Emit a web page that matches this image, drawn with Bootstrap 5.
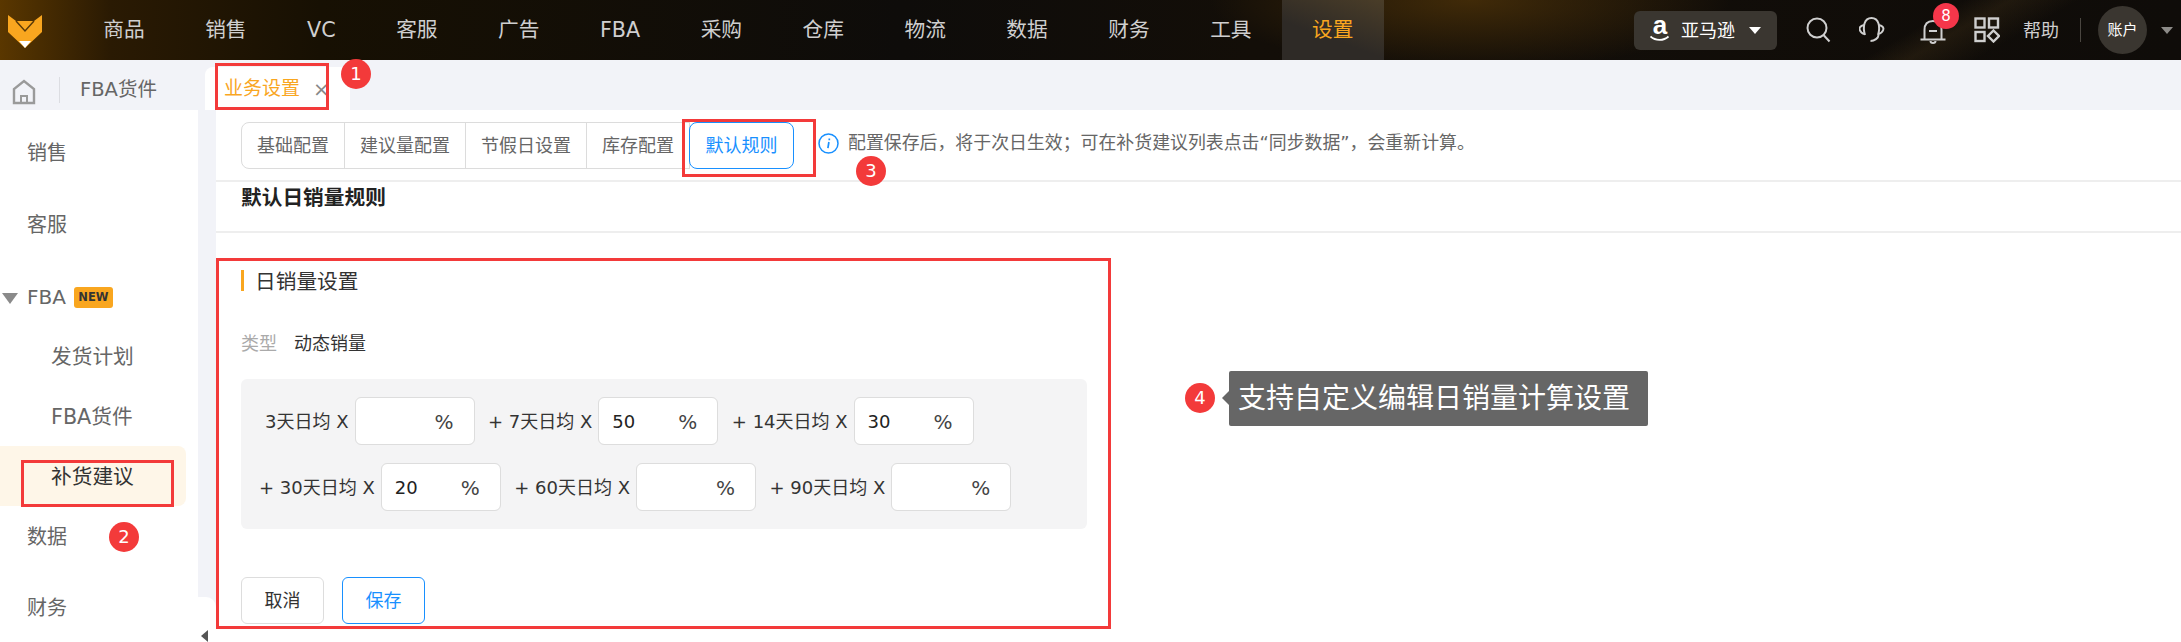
<!DOCTYPE html>
<html lang="zh">
  <head>
    <meta charset="UTF-8" />
    <meta name="viewport" content="width=device-width, initial-scale=1.0" />
    <title>业务设置</title>
    <link href="https://cdn.jsdelivr.net/npm/bootstrap@5.3.0/dist/css/bootstrap.min.css" rel="stylesheet" />
    <style>
      html, body {
        height: 642px;
        overflow: hidden;
      }
      body {
        position: relative;
        background: #fff;
        color: #333;
        font-family: "DejaVu Sans", "Noto Sans CJK SC", sans-serif;
        font-size: 18px;
      }
      /* top bar */
      .top-bar {
        height: 60px;
        padding: 0 8px 0 0;
        flex-wrap: nowrap;
        background:
          linear-gradient(150deg, transparent 86%, rgba(120, 90, 40, 0.16) 88%, transparent 91%),
          radial-gradient(ellipse 260px 70px at 1470px 0, rgba(80, 52, 8, 0.75), transparent),
          linear-gradient(90deg, #5a3700 0, #2a1a03 110px, #171003 320px, #0e0c0a 900px, #130e08 1250px, #0f0c09 100%);
      }
      .fox-logo {
        width: 73px;
        height: 60px;
        flex: none;
      }
      .top-nav .nav-link {
        height: 60px;
        line-height: 60px;
        padding: 0 30.25px;
        font-size: 20.7px;
        color: #cfcfcf;
      }
      .top-nav .nav-link.active {
        background: linear-gradient(20deg, #2e2a26 40%, #4a3d28 100%);
        color: #f9a61f;
      }
      .market-btn {
        width: 143px;
        height: 39px;
        background: #3a3630;
        border-radius: 6px;
        color: #fff;
        padding-left: 16px;
      }
      .amazon-a {
        width: 20px;
        height: 32px;
        margin-right: 11px;
        flex: none;
      }
      .market-caret {
        width: 0;
        height: 0;
        margin-left: 14px;
        border-left: 6px solid transparent;
        border-right: 6px solid transparent;
        border-top: 7px solid #fff;
      }
      .top-ico {
        position: relative;
        width: 26px;
        height: 26px;
        margin-left: 28px;
        flex: none;
      }
      .top-ico.bell-ico {
        margin-left: 35px;
      }
      .bell-count {
        position: absolute;
        left: 13px;
        top: -14px;
        width: 26px;
        height: 26px;
        line-height: 26px;
        text-align: center;
        border-radius: 50%;
        background: #f5364a;
        color: #fff;
        font-size: 15px;
      }
      .help-link {
        margin-left: 23px;
        color: #cfcfcf;
      }
      .top-sep {
        width: 1px;
        height: 24px;
        margin-left: 21px;
        background: #4a4640;
      }
      .account-dot {
        width: 49px;
        height: 48px;
        margin-left: 17px;
        border-radius: 50%;
        background: #3a3630;
        color: #fff;
        font-size: 15px;
      }
      .account-caret {
        width: 0;
        height: 0;
        margin-left: 14px;
        border-left: 6px solid transparent;
        border-right: 6px solid transparent;
        border-top: 7px solid #8d8b88;
      }
      /* tab strip */
      .tab-strip {
        height: 50px;
        background: #f2f3f8;
        padding-top: 7px;
      }
      .home-cell {
        width: 60px;
        height: 26px;
        padding-left: 12px;
        margin-top: 10px;
        border-right: 1px solid #dcdde2;
      }
      .tab-plain {
        margin: 10px 0 0 20px;
        width: 125px;
        line-height: 26px;
        font-size: 19.5px;
        color: #666;
      }
      .tab-current {
        width: 145px;
        height: 43px;
        padding-left: 19px;
        background: #fff;
        border-radius: 8px 8px 0 0;
        color: #f9a61f;
        font-size: 19px;
      }
      .tab-close {
        margin-left: 13px;
        color: #888;
        font-size: 20px;
      }
      /* sidebar */
      .page-body {
        height: 532px;
      }
      .side-menu {
        width: 198px;
        padding: 7px 12px 0 0;
        flex: none;
        font-size: 20px;
      }
      .side-menu .nav-link {
        display: flex;
        align-items: center;
        height: 72px;
        padding: 0 0 0 27px;
        color: #666;
      }
      .side-menu .nav-link.fba-head {
        height: 65px;
        padding-top: 7px;
      }
      .side-menu .nav-link.sub-link {
        height: 60px;
        padding: 4px 0 0 51px;
        font-size: 20.7px;
      }
      .side-menu .nav-link.sub-link.active {
        background: #fef6e8;
        border-radius: 0 8px 8px 0;
        color: #333;
      }
      .side-menu .nav-link.data-link {
        height: 62px;
        margin-bottom: 4px;
      }
      .side-caret {
        position: absolute;
        left: 2px;
        top: 32px;
        width: 0;
        height: 0;
        border-left: 8px solid transparent;
        border-right: 8px solid transparent;
        border-top: 11px solid #8a8a8a;
      }
      .new-tag {
        margin-left: 8px;
        width: 39px;
        height: 21px;
        line-height: 21px;
        text-align: center;
        border-radius: 3px;
        background: #f9a61f;
        color: #333;
        font-size: 11.5px;
        font-weight: 700;
      }
      .side-gutter {
        position: relative;
        width: 18px;
        flex: none;
        background: #f2f3f8;
      }
      .collapse-tab {
        position: absolute;
        left: 0;
        right: 0;
        bottom: 0;
        height: 45px;
        background: #fff;
        border-radius: 0 10px 0 0;
      }
      .collapse-tab::after {
        content: "";
        position: absolute;
        left: 3px;
        bottom: 0;
        border-top: 6px solid transparent;
        border-bottom: 6px solid transparent;
        border-right: 7px solid #555;
      }
      /* main area */
      .config-tools {
        height: 72px;
        padding: 12px 0 0 25px;
        border-bottom: 2px solid #eee;
      }
      .config-tabs .btn {
        height: 47px;
        padding: 0 15px;
        font-size: 18px;
        white-space: nowrap;
        color: #666;
        background: #fff;
        border-color: #dcdcdc;
        border-radius: 8px;
      }
      .config-tabs .btn.tab-on {
        width: 105px;
        padding: 0;
        margin-left: -2px;
        color: #1890ff;
        border-color: #1890ff;
        border-radius: 8px;
        z-index: 1;
      }
      .config-tip {
        margin-left: 24px;
        color: #666;
        font-size: 17.9px;
      }
      .info-mark {
        width: 21px;
        height: 21px;
        margin-right: 9px;
        flex: none;
      }
      .rule-head {
        height: 51px;
        padding: 1px 0 0 25px;
        border-bottom: 2px solid #eee;
        font-size: 20.7px;
        font-weight: 700;
        color: #222;
      }
      .rule-form {
        padding: 37px 0 0 25px;
        width: 871px;
      }
      .form-title {
        height: 21px;
        line-height: 25px;
        padding-left: 11px;
        border-left: 3px solid #f9a61f;
        font-size: 20.7px;
        color: #333;
      }
      .type-line {
        margin-top: 40px;
        height: 24px;
      }
      .type-key {
        width: 53px;
        color: #aaa;
      }
      .rate-panel {
        margin-top: 24px;
        height: 150px;
        padding: 18px 0 0 18px;
        background: #f4f4f5;
        border-radius: 6px;
      }
      .rate-row {
        height: 48px;
        margin-bottom: 18px;
      }
      .rate-row.first-row {
        padding-left: 6px;
      }
      .rate-item {
        margin-right: 13.5px;
        white-space: nowrap;
      }
      .rate-box {
        position: relative;
        width: 120px;
        height: 48px;
        margin-left: 6px;
      }
      .rate-box .form-control {
        height: 48px;
        padding: 0 36px 0 13px;
        border-color: #ddd;
        border-radius: 6px;
        font-size: 18px;
        color: #222;
      }
      .rate-unit {
        position: absolute;
        right: 21px;
        top: 10px;
        color: #444;
        font-size: 20px;
      }
      .form-actions {
        margin-top: 48px;
        gap: 18px;
      }
      .form-actions .btn {
        width: 83px;
        height: 47px;
        padding: 0;
        font-size: 18px;
        border-radius: 6px;
      }
      .btn-cancel {
        color: #333;
        background: #fff;
        border-color: #ddd;
      }
      .btn-save {
        color: #1890ff;
        background: #fff;
        border-color: #1890ff;
      }
      /* red callouts drawn over the page */
      .mark-box {
        position: absolute;
        border: 3px solid #f33a3a;
        pointer-events: none;
      }
      .mark-dot {
        position: absolute;
        width: 30px;
        height: 30px;
        line-height: 30px;
        text-align: center;
        border-radius: 50%;
        background: #f33a3a;
        color: #fff;
        font-size: 18px;
      }
      .box-1 { left: 215px; top: 63px; width: 114px; height: 47px; }
      .box-2 { left: 21px; top: 460px; width: 153px; height: 47px; }
      .box-3 { left: 682px; top: 119px; width: 134px; height: 58px; }
      .box-4 { left: 216px; top: 258px; width: 895px; height: 371px; }
      .dot-1 { left: 341px; top: 59px; }
      .dot-2 { left: 109px; top: 522px; }
      .dot-3 { left: 856px; top: 156px; }
      .dot-4 { left: 1185px; top: 383px; }
      .mark-note {
        position: absolute;
        left: 1229px;
        top: 371px;
        width: 419px;
        height: 55px;
        line-height: 55px;
        padding-left: 9px;
        background: #666;
        border-radius: 2px;
        color: #fff;
        font-size: 28px;
        white-space: nowrap;
      }
      .mark-note::before {
        content: "";
        position: absolute;
        left: -7px;
        top: 20px;
        border-top: 7px solid transparent;
        border-bottom: 7px solid transparent;
        border-right: 7px solid #666;
      }
    </style>
  </head>
  <body>
    <!-- top navigation -->
    <nav class="navbar top-bar">
      <div class="d-flex align-items-center">
        <svg class="fox-logo" viewBox="0 0 73 60">
          <polygon points="8,15 16,21 34,21 42,15 42,32 25,48 8,32" fill="#f9a61f" />
          <polygon points="19,41 31,41 25,48" fill="#fff" />
          <polyline points="16,21 25,31 34,21" fill="none" stroke="#5a3a08" stroke-width="1.5" />
        </svg>
        <ul class="nav top-nav flex-nowrap">
          <li class="nav-item"><a class="nav-link" href="#">商品</a></li>
          <li class="nav-item"><a class="nav-link" href="#">销售</a></li>
          <li class="nav-item"><a class="nav-link" href="#">VC</a></li>
          <li class="nav-item"><a class="nav-link" href="#">客服</a></li>
          <li class="nav-item"><a class="nav-link" href="#">广告</a></li>
          <li class="nav-item"><a class="nav-link" href="#">FBA</a></li>
          <li class="nav-item"><a class="nav-link" href="#">采购</a></li>
          <li class="nav-item"><a class="nav-link" href="#">仓库</a></li>
          <li class="nav-item"><a class="nav-link" href="#">物流</a></li>
          <li class="nav-item"><a class="nav-link" href="#">数据</a></li>
          <li class="nav-item"><a class="nav-link" href="#">财务</a></li>
          <li class="nav-item"><a class="nav-link" href="#">工具</a></li>
          <li class="nav-item"><a class="nav-link active" href="#">设置</a></li>
        </ul>
      </div>
      <div class="d-flex align-items-center ms-auto">
        <div class="market-btn d-flex align-items-center">
          <svg class="amazon-a" viewBox="0 0 20 32">
            <text x="10" y="20" text-anchor="middle" font-family="Liberation Sans" font-weight="700" font-size="26" fill="#fff">a</text>
            <path d="M0.5 22.5c5 4.5 13 4.5 18 0" fill="none" stroke="#fff" stroke-width="1.8" />
          </svg>
          <span>亚马逊</span>
          <span class="market-caret"></span>
        </div>
        <svg class="top-ico" viewBox="0 0 26 26" fill="none" stroke="#cfcfcf" stroke-width="2">
          <circle cx="12" cy="11" r="9.5" />
          <path d="M18.5 18l6 6.5" />
        </svg>
        <svg class="top-ico" viewBox="0 0 26 26" fill="none" stroke="#cfcfcf" stroke-width="2">
          <path d="M6 18C3.5 10 5 1 12.5 1S21.5 10 19 18" />
          <path d="M5 8C1 9 0 11 .8 13S3 16.5 5.5 17" />
          <path d="M20 8c4 1 5 3 4.2 5S22 16.5 19.5 17" />
          <path d="M19.5 18c0 3-4 6-8 6" />
        </svg>
        <div class="top-ico bell-ico">
          <svg viewBox="0 0 26 26" width="26" height="26" fill="none" stroke="#cfcfcf" stroke-width="2">
            <path d="M4.5 20V11c0-6 3.500-9 8.500-9s8.500 3 8.500 9v9" />
            <path d="M.5 20.500h25M9 12h8" />
            <path d="M10.500 22c0 2.500 5 2.500 5 0" />
          </svg>
          <span class="bell-count">8</span>
        </div>
        <svg class="top-ico" viewBox="0 0 26 26" fill="none" stroke="#cfcfcf" stroke-width="2.4">
          <rect x="1.5" y="1.5" width="9" height="9" />
          <rect x="15" y="1.5" width="9" height="9" />
          <rect x="1.5" y="15" width="9" height="9" />
          <polygon points="19.5,13.5 25,19 19.5,24.5 14,19" />
        </svg>
        <span class="help-link">帮助</span>
        <span class="top-sep"></span>
        <div class="account-dot d-flex align-items-center justify-content-center">账户</div>
        <span class="account-caret"></span>
      </div>
    </nav>

    <!-- open pages -->
    <div class="tab-strip d-flex">
      <div class="home-cell">
        <svg width="24" height="26" viewBox="0 0 24 26" fill="none" stroke="#9a9a9a" stroke-width="2.4">
          <path d="M2 24V10L12 2l10 8v14z" />
          <path d="M9 24v-7h6v7" stroke-width="2" />
        </svg>
      </div>
      <div class="tab-plain">FBA货件</div>
      <div class="tab-current d-flex align-items-center">
        <span>业务设置</span><span class="tab-close">×</span>
      </div>
    </div>

    <div class="page-body d-flex">
      <!-- left menu -->
      <ul class="nav flex-column flex-nowrap side-menu">
        <li class="nav-item"><a class="nav-link" href="#">销售</a></li>
        <li class="nav-item"><a class="nav-link" href="#">客服</a></li>
        <li class="nav-item position-relative">
          <span class="side-caret"></span>
          <a class="nav-link fba-head" href="#">FBA<span class="new-tag">NEW</span></a>
        </li>
        <li class="nav-item"><a class="nav-link sub-link" href="#">发货计划</a></li>
        <li class="nav-item"><a class="nav-link sub-link" href="#">FBA货件</a></li>
        <li class="nav-item"><a class="nav-link sub-link active" href="#">补货建议</a></li>
        <li class="nav-item"><a class="nav-link data-link" href="#">数据</a></li>
        <li class="nav-item"><a class="nav-link" href="#">财务</a></li>
      </ul>
      <div class="side-gutter"><div class="collapse-tab"></div></div>

      <!-- settings -->
      <main class="flex-grow-1">
        <div class="config-tools d-flex align-items-start">
          <div class="btn-group config-tabs">
            <button type="button" class="btn">基础配置</button>
            <button type="button" class="btn">建议量配置</button>
            <button type="button" class="btn">节假日设置</button>
            <button type="button" class="btn">库存配置</button>
            <button type="button" class="btn tab-on">默认规则</button>
          </div>
          <div class="config-tip d-flex align-items-center mt-2">
            <svg class="info-mark" viewBox="0 0 21 21" fill="none" stroke="#1890ff">
              <circle cx="10.5" cy="10.5" r="9.5" stroke-width="1.5" />
              <path d="M11.3 5.6v1.6M10.9 9l-1 6.2" stroke-width="1.7" />
            </svg>
            <span>配置保存后，将于次日生效；可在补货建议列表点击“同步数据”，会重新计算。</span>
          </div>
        </div>
        <div class="rule-head">默认日销量规则</div>
        <form class="rule-form">
          <div class="form-title">日销量设置</div>
          <div class="type-line d-flex align-items-center">
            <span class="type-key">类型</span><span>动态销量</span>
          </div>
          <div class="rate-panel">
            <div class="rate-row first-row d-flex align-items-center">
              <div class="rate-item d-flex align-items-center">3天日均 X<div class="rate-box"><input class="form-control" type="text" /><span class="rate-unit">%</span></div></div>
              <div class="rate-item d-flex align-items-center">+ 7天日均 X<div class="rate-box"><input class="form-control" type="text" value="50" /><span class="rate-unit">%</span></div></div>
              <div class="rate-item d-flex align-items-center">+ 14天日均 X<div class="rate-box"><input class="form-control" type="text" value="30" /><span class="rate-unit">%</span></div></div>
            </div>
            <div class="rate-row d-flex align-items-center">
              <div class="rate-item d-flex align-items-center">+ 30天日均 X<div class="rate-box"><input class="form-control" type="text" value="20" /><span class="rate-unit">%</span></div></div>
              <div class="rate-item d-flex align-items-center">+ 60天日均 X<div class="rate-box"><input class="form-control" type="text" /><span class="rate-unit">%</span></div></div>
              <div class="rate-item d-flex align-items-center">+ 90天日均 X<div class="rate-box"><input class="form-control" type="text" /><span class="rate-unit">%</span></div></div>
            </div>
          </div>
          <div class="form-actions d-flex">
            <button type="button" class="btn btn-cancel">取消</button>
            <button type="button" class="btn btn-save">保存</button>
          </div>
        </form>
      </main>
    </div>

    <!-- callouts -->
    <div class="mark-box box-1"></div>
    <div class="mark-box box-2"></div>
    <div class="mark-box box-3"></div>
    <div class="mark-box box-4"></div>
    <div class="mark-dot dot-1">1</div>
    <div class="mark-dot dot-2">2</div>
    <div class="mark-dot dot-3">3</div>
    <div class="mark-dot dot-4">4</div>
    <div class="mark-note">支持自定义编辑日销量计算设置</div>

    <script src="https://cdn.jsdelivr.net/npm/bootstrap@5.3.0/dist/js/bootstrap.bundle.min.js"></script>
  </body>
</html>
